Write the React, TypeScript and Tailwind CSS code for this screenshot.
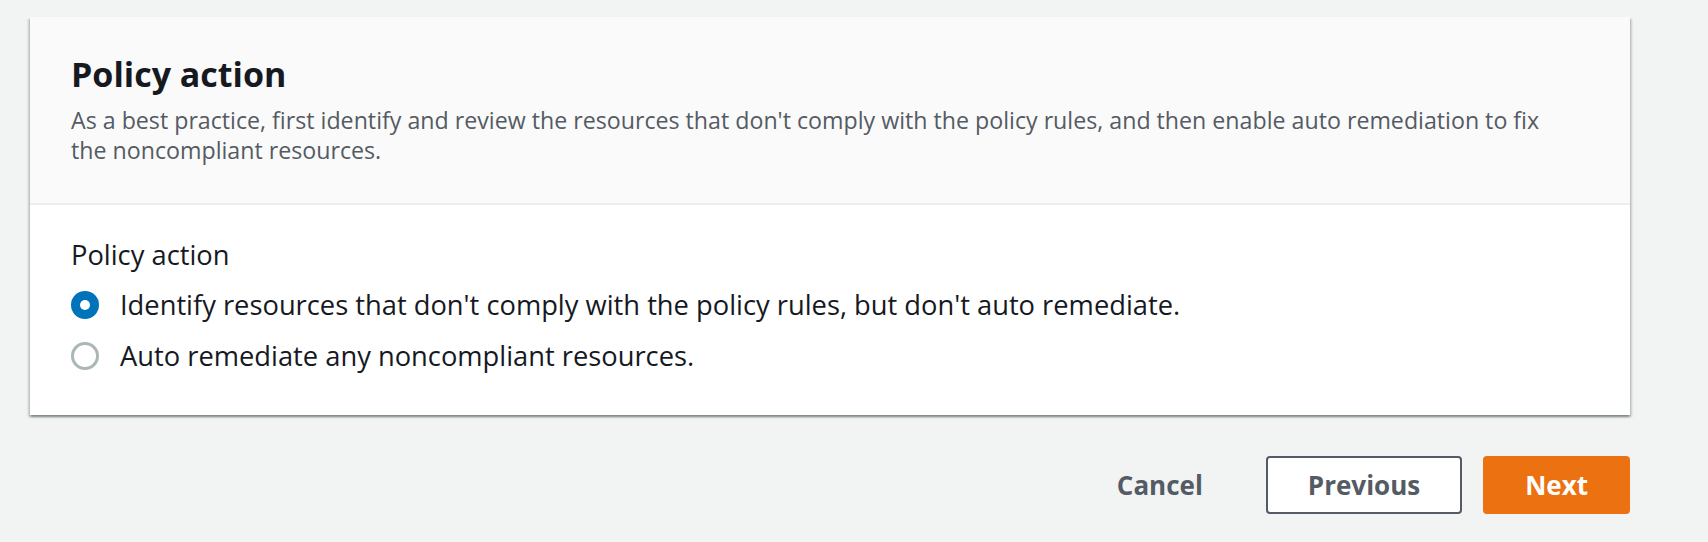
import { useState } from "react";

const options = [
  { id: "identify", label: "Identify resources that don't comply with the policy rules, but don't auto remediate." },
  { id: "auto", label: "Auto remediate any noncompliant resources." },
];

function Radio({ checked }: { checked: boolean }) {
  return checked ? (
    <span className="flex h-[28px] w-[28px] shrink-0 items-center justify-center rounded-full bg-[#0073bb]">
      <span className="h-[10px] w-[10px] rounded-full bg-white" />
    </span>
  ) : (
    <span className="h-[28px] w-[28px] shrink-0 rounded-full border-[3px] border-[#aab7b8] bg-white" />
  );
}

export default function App() {
  const [action, setAction] = useState("identify");

  return (
    <div className="min-h-[542px] bg-[#f2f3f3] pl-[30px] pr-[78px] pt-[17px] font-['Open_Sans',sans-serif]">
      <div className="bg-white shadow-[0_2px_2px_0_rgba(0,28,36,0.3),2px_2px_2px_0_rgba(0,28,36,0.15),-2px_2px_2px_0_rgba(0,28,36,0.15)]">
        <div className="border-b-2 border-[#eaeded] bg-[#fafafa] px-[41px] pb-[38px] pt-[36px]">
          <h2 className="text-[34px] font-bold leading-[42px] text-[#16191f]">Policy action</h2>
          <p className="mt-[10px] max-w-[1500px] text-[23.2px] leading-[30px] text-[#545b64]">
            As a best practice, first identify and review the resources that don't comply with the policy rules, and then enable auto remediation to fix the noncompliant resources.
          </p>
        </div>
        <div className="px-[41px] pb-[41px] pt-[32px]">
          <div className="text-[27.3px] leading-[36px] text-[#16191f]">Policy action</div>
          <div className="mt-[14px] flex flex-col gap-[15px]">
            {options.map((o) => (
              <label key={o.id} className="flex h-[36px] cursor-pointer items-center gap-[21px]" onClick={() => setAction(o.id)}>
                <Radio checked={action === o.id} />
                <span className="text-[27.3px] leading-[36px] text-[#16191f]">{o.label}</span>
              </label>
            ))}
          </div>
        </div>
      </div>
      <div className="mt-[41px] flex justify-end gap-[21px]">
        <button className="h-[58px] px-[42px] text-[26px] font-bold text-[#545b64]">Cancel</button>
        <button className="h-[58px] rounded-[4px] border-2 border-[#545b64] bg-white px-[40px] text-[26px] font-bold text-[#545b64]">Previous</button>
        <button className="h-[58px] rounded-[4px] bg-[#ec7211] px-[42px] text-[26px] font-bold text-white">Next</button>
      </div>
    </div>
  );
}
